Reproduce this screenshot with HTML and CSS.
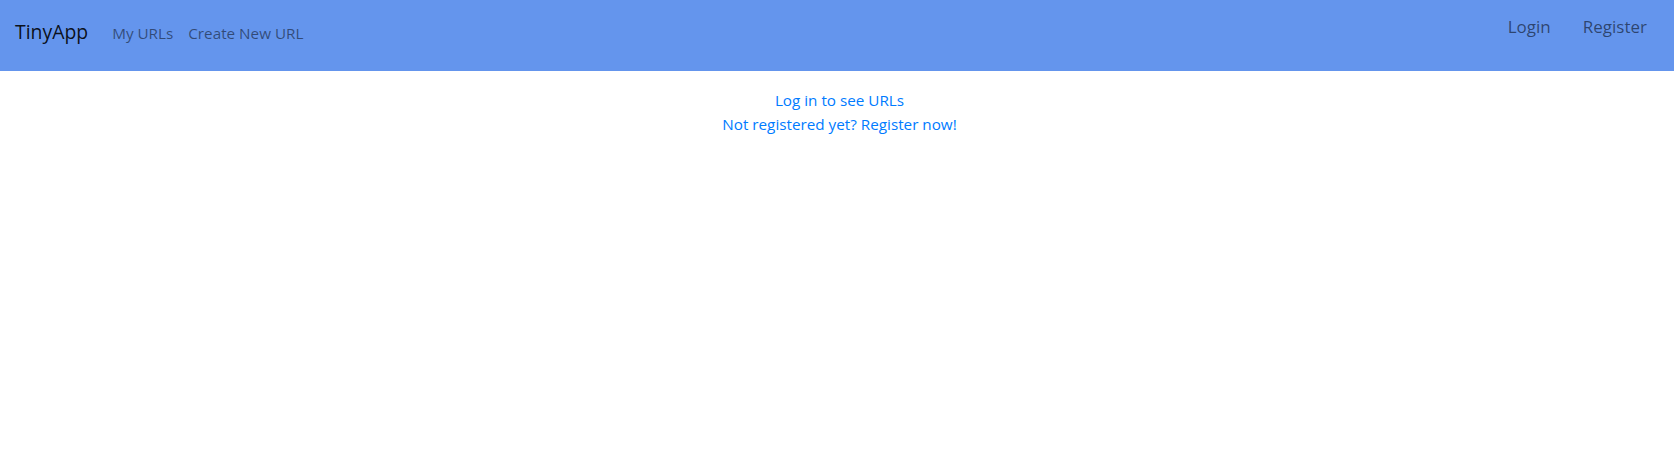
FILE: index.html
```html
<!DOCTYPE html>
<html lang="en">
<head>
<meta charset="utf-8">
<title>TinyApp</title>
<link rel="stylesheet" href="styles.css">
</head>
<body>
<nav class="navbar">
  <div class="nav-left">
    <a class="brand" href="#">TinyApp</a>
    <a class="nav-link" href="#">My URLs</a>
    <a class="nav-link" href="#">Create New URL</a>
  </div>
  <div class="nav-right">
    <a class="auth-link" href="#">Login</a>
    <a class="auth-link" href="#">Register</a>
  </div>
</nav>
<main class="content">
  <a class="msg-link" href="#">Log in to see URLs</a>
  <a class="msg-link" href="#">Not registered yet? Register now!</a>
</main>
</body>
</html>
```

FILE: styles.css
```css
* { box-sizing: border-box; }
html, body { margin: 0; padding: 0; }
body {
  font-family: "Open Sans", "Noto Sans", sans-serif;
  font-size: 15.25px;
  line-height: 24px;
  color: #212529;
  background: #ffffff;
}
a { text-decoration: none; }
.navbar {
  height: 71px;
  background: #6495ed;
  display: flex;
  justify-content: space-between;
  align-items: flex-start;
  padding: 0 27px 0 15px;
}
.nav-left {
  display: flex;
  align-items: baseline;
  padding-top: 17px;
}
.brand {
  font-size: 19.4px;
  line-height: 30px;
  color: rgba(0, 0, 0, 0.9);
  margin-right: 24px;
}
.nav-link {
  color: rgba(0, 0, 0, 0.5);
  margin-right: 15px;
}
.nav-right {
  display: flex;
  align-items: baseline;
  gap: 32px;
  padding-top: 13px;
}
.auth-link {
  font-size: 17px;
  line-height: 27px;
  color: rgba(0, 0, 0, 0.55);
}
.content {
  display: flex;
  flex-direction: column;
  align-items: center;
  padding: 17px 0 0 5px;
}
.msg-link {
  color: #007bff;
}
```
